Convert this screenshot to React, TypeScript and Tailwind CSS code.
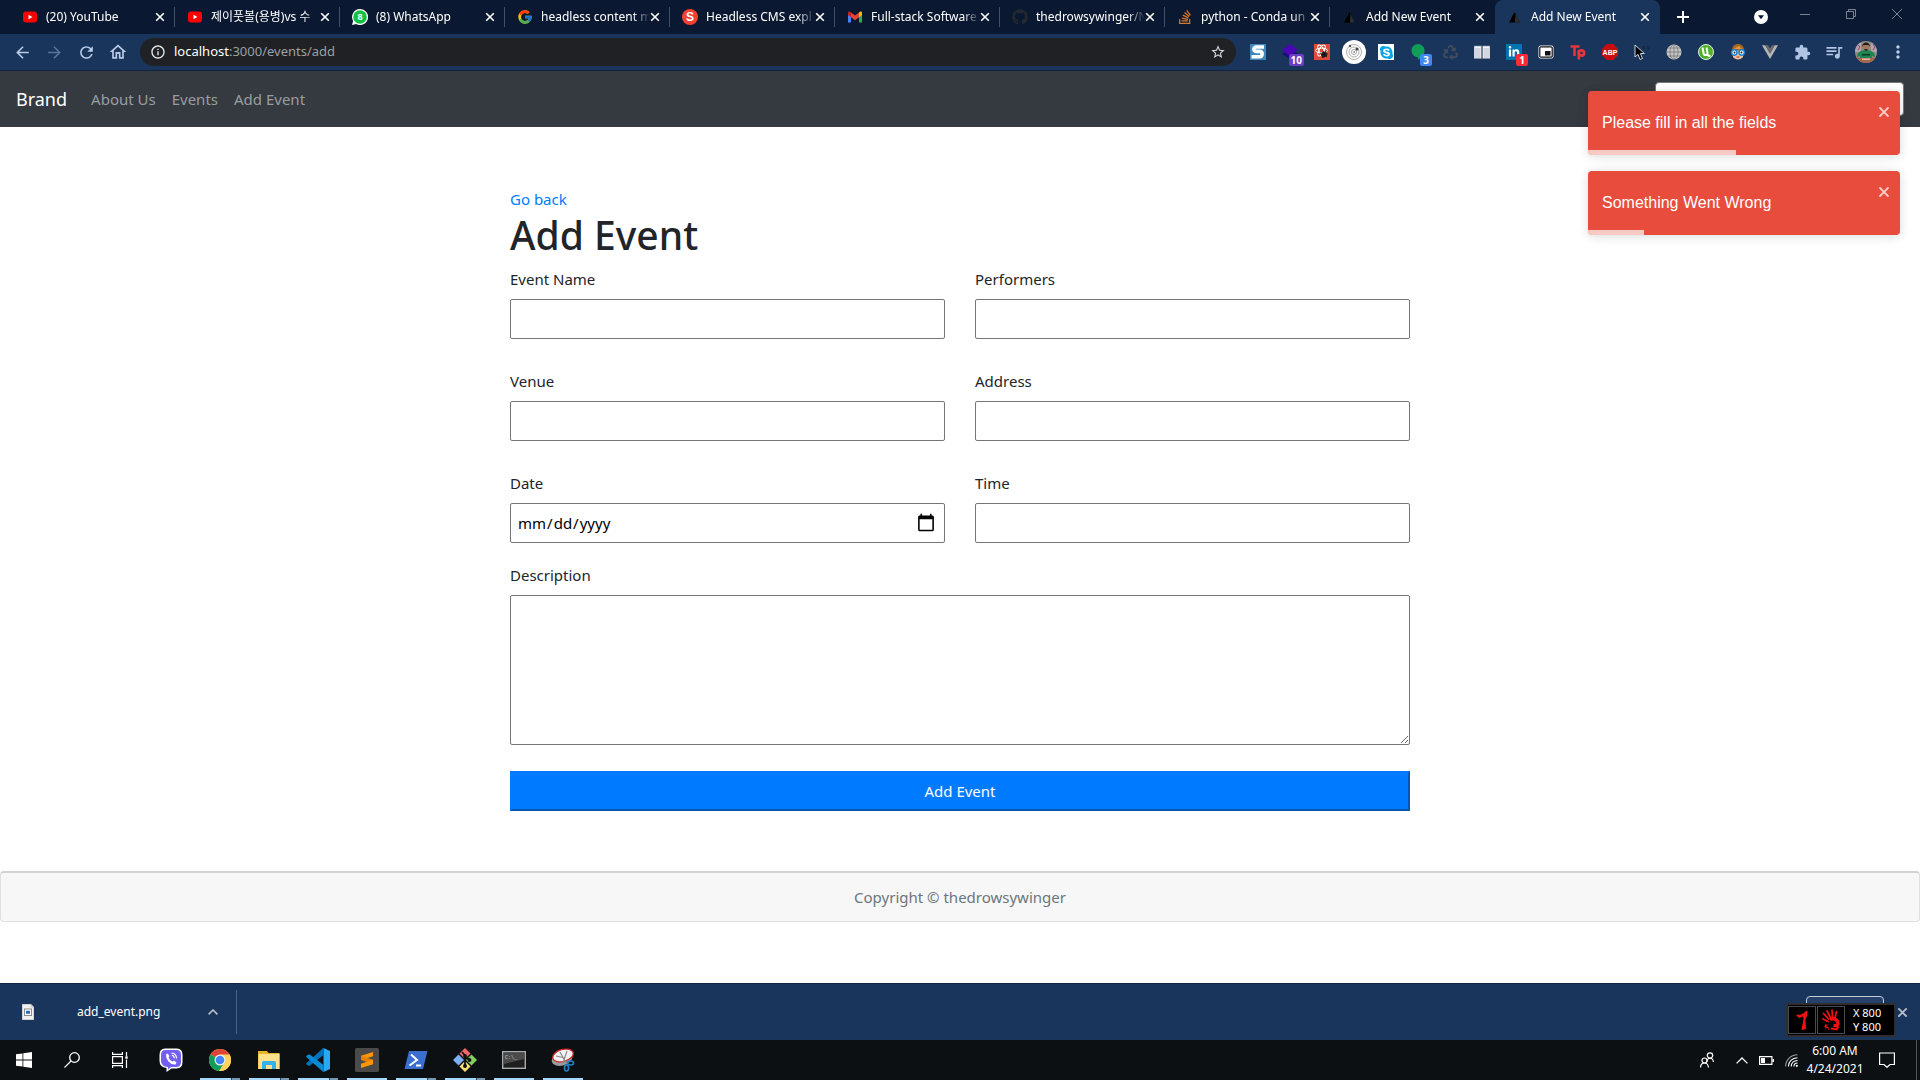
import React from "react";
import type { ReactNode } from "react";
import {
  FaGithub,
  FaLinkedinIn,
  FaRecycle,
  FaSkype,
  FaStackOverflow,
} from "react-icons/fa";
import { FcGoogle } from "react-icons/fc";
import {
  MdArrowBack,
  MdArrowForward,
  MdExtension,
  MdInfoOutline,
  MdMoreVert,
  MdOutlineHome,
  MdQueueMusic,
  MdRefresh,
  MdStarBorder,
} from "react-icons/md";

/* ---------- Favicons ---------- */

function YouTubeIcon() {
  return (
    <svg viewBox="0 0 16 16" className="size-4" aria-hidden="true">
      <rect x="1" y="2.5" width="14" height="11" rx="3" fill="#f00" />
      <path d="M6.5 5.7v4.6L10.4 8z" fill="#fff" />
    </svg>
  );
}

function WhatsAppIcon() {
  return (
    <svg viewBox="0 0 16 16" className="size-4" aria-hidden="true">
      <path d="M8 0a8 8 0 1 1-3.8 15L0 16l1.1-4A8 8 0 0 1 8 0z" fill="#fff" />
      <circle cx="8" cy="8" r="6.8" fill="#12c143" />
      <text x="8" y="11.4" textAnchor="middle" fontSize="9" fontWeight="700" fontFamily="Liberation Sans, sans-serif" fill="#fff">
        8
      </text>
    </svg>
  );
}

function SIcon() {
  return (
    <svg viewBox="0 0 16 16" className="size-4" aria-hidden="true">
      <circle cx="8" cy="8" r="8" fill="#f43f33" />
      <text x="8" y="12.400" textAnchor="middle" fontSize="12" fontWeight="700" fontFamily="Liberation Sans, sans-serif" fill="#fff">
        S
      </text>
    </svg>
  );
}

function GmailIcon() {
  return (
    <svg viewBox="0 0 16 16" className="size-4" aria-hidden="true">
      <path d="M1 4.5v9h3v-6.500z" fill="#4285f4" />
      <path d="M15 4.500v9h-3V7z" fill="#34a853" />
      <path d="M4 3.500v4.800L1 6V4c0-1.600 1.700-2 3-.5z" fill="#c5221f" />
      <path d="M12 3.500v4.800L15 6V4c0-1.600-1.700-2-3-.5z" fill="#fbbc04" />
      <path d="M4 3.500l4 3 4-3v4.800l-4 3-4-3z" fill="#ea4335" />
    </svg>
  );
}

function TriangleIcon() {
  return (
    <svg viewBox="0 0 16 16" className="size-4" aria-hidden="true">
      <path d="M7.500 3l5.500 10.500H2z" fill="#000" />
      <path d="M8.500 5l4.500 8.500H8z" fill="#2c2f33" />
    </svg>
  );
}

/* ---------- Browser tab strip ---------- */

type Tab = { title: string; icon: ReactNode; active?: boolean };

const tabs: Tab[] = [
  { title: "(20) YouTube", icon: <YouTubeIcon /> },
  { title: "제이풋볼(용병)vs 수", icon: <YouTubeIcon /> },
  { title: "(8) WhatsApp", icon: <WhatsAppIcon /> },
  { title: "headless content m", icon: <FcGoogle className="size-4" /> },
  { title: "Headless CMS expl", icon: <SIcon /> },
  { title: "Full-stack Software", icon: <GmailIcon /> },
  { title: "thedrowsywinger/N", icon: <FaGithub className="size-4 text-[#24292f]" /> },
  { title: "python - Conda un", icon: <FaStackOverflow className="size-4 text-[#d9782d]" /> },
  { title: "Add New Event", icon: <TriangleIcon /> },
  { title: "Add New Event", icon: <TriangleIcon />, active: true },
];

function CloseGlyph({ className }: { className: string }) {
  return (
    <svg viewBox="0 0 10 10" className={className} fill="none" stroke="currentColor" strokeWidth="1.6" aria-hidden="true">
      <path d="M1.200 1.200l7.600 7.600M8.800 1.200L1.200 8.800" />
    </svg>
  );
}

function BrowserTab({ tab, divider }: { tab: Tab; divider: boolean }) {
  return (
    <div
      className={
        tab.active
          ? "flex h-full w-[165px] items-center rounded-t-lg bg-[#1a355c] pr-[10px] pl-3"
          : "flex h-full w-[165px] items-center pl-3"
      }
    >
      <span className="w-4 shrink-0">{tab.icon}</span>
      <span className="ml-2 min-w-0 flex-1 whitespace-nowrap text-white [mask-image:linear-gradient(to_right,black_84%,transparent)]">
        {tab.title}
      </span>
      <button type="button" aria-label={"Close " + tab.title} className="flex h-4 w-[10px] shrink-0 items-center justify-center text-white">
        <CloseGlyph className="size-[10px]" />
      </button>
      {!tab.active && <span className={divider ? "ml-[9px] h-5 w-px bg-[#414f66]" : "ml-[9px] h-5 w-px"} />}
    </div>
  );
}

function TabStrip() {
  return (
    <div className="flex h-[34px] items-stretch bg-[#0a1931] pl-[10px] text-xs">
      {tabs.map((tab, i) => (
        <BrowserTab key={i} tab={tab} divider={i < 8} />
      ))}
      <button type="button" aria-label="New tab" className="ml-[11px] flex w-6 items-center justify-center text-white">
        <svg viewBox="0 0 12 12" className="size-3" stroke="currentColor" strokeWidth="2" aria-hidden="true">
          <path d="M6 0v12M0 6h12" />
        </svg>
      </button>
      <div className="ml-auto flex items-stretch text-[#7c8492]">
        <button type="button" aria-label="Search tabs" className="mr-[14px] flex items-center">
          <svg viewBox="0 0 14 14" className="size-[14px]" aria-hidden="true">
            <circle cx="7" cy="7" r="7" fill="#fff" />
            <path d="M4 5.200h6L7 9.200z" fill="#0a1931" />
          </svg>
        </button>
        <button type="button" aria-label="Minimize" className="flex h-7 w-[46px] items-center justify-center">
          <svg viewBox="0 0 10 10" className="size-[10px]" stroke="currentColor" aria-hidden="true">
            <path d="M0 5.500h10" />
          </svg>
        </button>
        <button type="button" aria-label="Restore" className="flex h-7 w-[46px] items-center justify-center">
          <svg viewBox="0 0 10 10" className="size-[10px]" fill="none" stroke="currentColor" aria-hidden="true">
            <path d="M.5 2.500h7v7h-7zM2.500 2.500v-2h7v7h-2" />
          </svg>
        </button>
        <button type="button" aria-label="Close window" className="flex h-7 w-[46px] items-center justify-center">
          <svg viewBox="0 0 10 10" className="size-[10px]" stroke="currentColor" aria-hidden="true">
            <path d="M0 0l10 10M10 0L0 10" />
          </svg>
        </button>
      </div>
    </div>
  );
}

/* ---------- Browser toolbar ---------- */

function StylishIcon() {
  return (
    <svg viewBox="0 0 16 16" className="size-4" aria-hidden="true">
      <rect width="16" height="16" fill="#3f87b8" />
      <path d="M14 3H6.500C3 3 3 7.400 6.500 7.400h3c3.500 0 3.500 5.400 0 5.400H1.500" fill="none" stroke="#fff" strokeWidth="3.600" />
    </svg>
  );
}

function DiamondIcon() {
  return (
    <svg viewBox="0 0 16 16" className="size-4" aria-hidden="true">
      <path d="M8 4.500L16 10l-8 5-8-5z" fill="#1d0c78" />
      <path d="M8 0l8 6-8 6-8-6z" fill="#4a05b5" />
    </svg>
  );
}

function ReactHexIcon() {
  return (
    <svg viewBox="0 0 16 16" className="size-4" aria-hidden="true">
      <rect width="16" height="16" fill="#dd4b39" />
      <g fill="none" stroke="#fff" strokeWidth="1">
        <ellipse cx="7.500" cy="6.500" rx="6" ry="2.400" />
        <ellipse cx="7.500" cy="6.500" rx="6" ry="2.400" transform="rotate(60 7.500 6.500)" />
        <ellipse cx="7.500" cy="6.500" rx="6" ry="2.400" transform="rotate(120 7.500 6.500)" />
      </g>
      <path d="M9 7l3.500 1.500L13 12l-4 2-2-3z" fill="#1a1a1a" />
      <path d="M6 9l7 4M12 7l-4 7M14 10l-7 1" stroke="#1a1a1a" strokeWidth=".9" />
    </svg>
  );
}

function OrbitIcon() {
  return (
    <svg viewBox="0 0 24 24" className="size-6" aria-hidden="true">
      <circle cx="12" cy="12" r="12" fill="#fff" />
      <g fill="none" stroke="#9a9a9a" strokeWidth=".8">
        <circle cx="12" cy="12" r="7.500" />
        <circle cx="12" cy="12" r="5" />
        <circle cx="12" cy="12" r="2.600" />
      </g>
      <circle cx="8" cy="6" r="1.200" fill="#555" />
      <circle cx="15" cy="9" r="1.500" fill="#444" />
      <circle cx="12" cy="12" r="1.100" fill="#999" />
    </svg>
  );
}

function SkypeIcon() {
  return (
    <span className="flex size-4 items-center justify-center bg-white">
      <FaSkype className="size-[15px] text-[#0aa5e8]" />
    </span>
  );
}

function HangoutsIcon() {
  return (
    <svg viewBox="0 0 16 16" className="size-4" aria-hidden="true">
      <path d="M8 0a6.600 6.600 0 0 1 6.600 6.600c0 4-3 7.400-6.600 9.200v-2.600A6.600 6.600 0 1 1 8 0z" fill="#0f9d58" />
    </svg>
  );
}

function ColumnsIcon() {
  return (
    <svg viewBox="0 0 16 16" className="size-4" aria-hidden="true">
      <rect x="0" y="2" width="7.300" height="12.500" fill="#f2f4f7" stroke="#8792a6" strokeWidth=".6" />
      <rect x="8.700" y="2" width="7.300" height="12.500" fill="#f2f4f7" stroke="#8792a6" strokeWidth=".6" />
      <path d="M1 4h5.500v10H1zM9.500 4H15v10H9.500z" fill="#d3d6dd" />
    </svg>
  );
}

function LinkedInIcon() {
  return (
    <span className="flex size-4 items-center justify-center bg-[#0073b1]">
      <FaLinkedinIn className="size-3 text-white" />
    </span>
  );
}

function PipIcon() {
  return (
    <svg viewBox="0 0 16 16" className="size-4" aria-hidden="true">
      <rect x=".5" y="1.500" width="15" height="13" rx="2" fill="#fff" />
      <rect x="1.800" y="2.800" width="12.400" height="10.400" rx="1" fill="#fff" stroke="#111" strokeWidth="1.200" />
      <rect x="7" y="7" width="5.500" height="4.500" fill="#111" />
    </svg>
  );
}

function TpIcon() {
  return (
    <svg viewBox="0 0 16 16" className="size-4" fill="none" stroke="#e8343b" strokeWidth="2.600" aria-hidden="true">
      <path d="M.5 2.500h9M4.500 2v10" />
      <path d="M8.800 6v9.500" />
      <circle cx="11.500" cy="9" r="2.600" />
    </svg>
  );
}

function AbpIcon() {
  return (
    <svg viewBox="0 0 16 16" className="size-4" aria-hidden="true">
      <path d="M4.700 0h6.600L16 4.700v6.600L11.300 16H4.700L0 11.300V4.700z" fill="#c70d12" />
      <text x="8" y="10.600" textAnchor="middle" fontSize="7" fontWeight="700" fontFamily="Liberation Sans, sans-serif" fill="#fff">
        ABP
      </text>
    </svg>
  );
}

function CursorIcon() {
  return (
    <svg viewBox="0 0 16 16" className="size-4" aria-hidden="true">
      <path d="M1 1v12l3-2.600L6 15.500l2.500-1L6.400 9.500h4z" fill="#000" stroke="#dfe5ee" strokeWidth=".9" />
      <text x="8" y="5" fontSize="6" fontFamily="Liberation Sans, sans-serif" fill="#0c1526">
        x,y
      </text>
    </svg>
  );
}

function GlobeIcon() {
  return (
    <svg viewBox="0 0 16 16" className="size-4" aria-hidden="true">
      <circle cx="8" cy="8" r="7.500" fill="#c5c5c5" />
      <g fill="none" stroke="#777" strokeWidth=".8">
        <path d="M8 .5v15M.5 8h15M1.800 4h12.400M1.800 12h12.400" />
        <ellipse cx="8" cy="8" rx="4" ry="7.500" />
      </g>
    </svg>
  );
}

function UtorrentIcon() {
  return (
    <svg viewBox="0 0 16 16" className="size-4" aria-hidden="true">
      <circle cx="8" cy="8" r="7.500" fill="#4fb02a" stroke="#e8f5e2" />
      <path d="M4.500 3.500l1 5.500c.5 3 4.300 2.500 4 0l-1-5.500M9.700 10.500c.3 1.500 1.300 1.700 2.800 1" fill="none" stroke="#fff" strokeWidth="2" />
    </svg>
  );
}

function FaceIcon() {
  return (
    <svg viewBox="0 0 16 16" className="size-4" aria-hidden="true">
      <path d="M2 12V6c0-8 12-8 12 0v6z" fill="#a8661d" />
      <path d="M3 6.500h10V13c-2.500 3.300-7.500 3.300-10 0z" fill="#f3c398" />
      <path d="M5 4l4-2 3 3H4z" fill="#d99845" />
      <g fill="#fff" stroke="#1681d9" strokeWidth="1.500">
        <circle cx="4.300" cy="8.500" r="2.700" />
        <circle cx="11.700" cy="8.500" r="2.700" />
      </g>
      <circle cx="4.500" cy="8.500" r="1" fill="#222" />
      <circle cx="11.500" cy="8.500" r="1" fill="#222" />
      <path d="M6.500 13h3" stroke="#a33" />
    </svg>
  );
}

function VueIcon() {
  return (
    <svg viewBox="0 0 16 16" className="size-4" aria-hidden="true">
      <path d="M0 1.200h3.200L8 9.500l4.800-8.300H16L8 15z" fill="#b5b5b5" />
      <path d="M3.200 1.200H6L8 4.600l2-3.400h2.800L8 9.500z" fill="#6b6b6b" />
    </svg>
  );
}

function AvatarIcon() {
  return (
    <svg viewBox="0 0 22 22" className="size-[22px] rounded-full" aria-hidden="true">
      <rect width="22" height="22" fill="#8f8f80" />
      <path d="M0 2h6v9H0zM16 2h6v9h-6z" fill="#b2a1b0" />
      <path d="M3 4l2 2-2 3M18 3l2 3-2 3" stroke="#a23c4c" fill="none" />
      <path d="M2 16c0-5 4-7 9-7s9 2 9 7l-3-1v4H5v-4z" fill="#1c8553" />
      <circle cx="11" cy="6" r="3.400" fill="#a8765a" />
      <path d="M7 6c0-6 8-6 8 0l-1.500-2h-5z" fill="#1d1b1c" />
      <path d="M9 8h4l-2 2.200z" fill="#2f211f" />
      <path d="M7 13h8v1.500H7z" fill="#14342a" />
      <path d="M1 16l5 1h10l5-1v6H1z" fill="#a8664e" />
      <path d="M7 17.500h8V19H7z" fill="#e2b9a0" />
    </svg>
  );
}

type Extension = { name: string; icon: ReactNode; badge?: string; badgeClass?: string };

const extensions: Extension[] = [
  { name: "Stylish", icon: <StylishIcon /> },
  { name: "Layers", icon: <DiamondIcon />, badge: "10", badgeClass: "bg-[#6b3cc4]" },
  { name: "React tools", icon: <ReactHexIcon /> },
  { name: "Orbit", icon: <OrbitIcon /> },
  { name: "Skype", icon: <SkypeIcon /> },
  { name: "Hangouts", icon: <HangoutsIcon />, badge: "3", badgeClass: "bg-[#4285f4]" },
  { name: "Recycle", icon: <FaRecycle className="size-[15px] text-[#434c5b]" /> },
  { name: "Columns", icon: <ColumnsIcon /> },
  { name: "LinkedIn", icon: <LinkedInIcon />, badge: "1", badgeClass: "bg-[#fa2b35]" },
  { name: "Picture in picture", icon: <PipIcon /> },
  { name: "Toptal", icon: <TpIcon /> },
  { name: "Adblock Plus", icon: <AbpIcon /> },
  { name: "Coordinates", icon: <CursorIcon /> },
  { name: "Globe", icon: <GlobeIcon /> },
  { name: "uTorrent", icon: <UtorrentIcon /> },
  { name: "Spy", icon: <FaceIcon /> },
  { name: "Vue devtools", icon: <VueIcon /> },
  { name: "Extensions", icon: <MdExtension className="size-[17px] text-[#b0c4e4]" /> },
  { name: "Media", icon: <MdQueueMusic className="size-5 text-[#b0c4e4]" /> },
  { name: "Profile", icon: <AvatarIcon /> },
  { name: "Menu", icon: <MdMoreVert className="size-5 text-[#c0cfe8]" /> },
];

function Toolbar() {
  return (
    <div className="flex h-[37px] items-center border-b border-[#13233d] bg-[#1a355c] pr-[6px] pl-[6px] text-[#b9cbe8]">
      <button type="button" aria-label="Back" className="flex w-8 justify-center">
        <MdArrowBack className="size-[19px]" />
      </button>
      <button type="button" aria-label="Forward" className="flex w-8 justify-center text-[#5a7398]">
        <MdArrowForward className="size-[19px]" />
      </button>
      <button type="button" aria-label="Reload" className="flex w-8 justify-center">
        <MdRefresh className="size-[19px]" />
      </button>
      <button type="button" aria-label="Home" className="flex w-8 justify-center">
        <MdOutlineHome className="size-5" />
      </button>
      <div className="ml-[6px] flex h-7 min-w-0 flex-1 items-center rounded-full bg-[#202124] px-[10px]">
        <MdInfoOutline className="size-4 text-[#e8eaed]" />
        <span className="ml-2 flex-1 text-[13px] text-[#9aa0a6]">
          <span className="text-white">localhost</span>:3000/events/add
        </span>
        <MdStarBorder className="size-4 text-[#dadce0]" />
      </div>
      <div className="ml-[6px] flex items-center">
        {extensions.map((ext) => (
          <button key={ext.name} type="button" aria-label={ext.name} className="relative flex h-7 w-8 items-center justify-center">
            {ext.icon}
            {ext.badge && (
              <span
                className={
                  "absolute right-[2px] bottom-0 flex h-3 min-w-3 items-center justify-center rounded-[2px] px-[2px] text-[10px] leading-3 font-bold text-white " +
                  ext.badgeClass
                }
              >
                {ext.badge}
              </span>
            )}
          </button>
        ))}
      </div>
    </div>
  );
}

/* ---------- Page ---------- */

function NavBar() {
  return (
    <nav className="flex h-14 items-center bg-[#343a40] px-4 text-[#9a9da0]">
      <a href="#brand" className="mr-4 text-lg text-white">
        Brand
      </a>
      <a href="#about" className="px-2 text-[15px]">
        About Us
      </a>
      <a href="#events" className="px-2 text-[15px]">
        Events
      </a>
      <a href="#add" className="px-2 text-[15px]">
        Add Event
      </a>
      <input type="text" aria-label="Search events" className="ml-auto h-[34px] w-[249px] rounded border border-[#767676] bg-white px-3" />
    </nav>
  );
}

function Field({ id, label, type }: { id: string; label: string; type: string }) {
  return (
    <div>
      <label htmlFor={id} className="mb-2 block">
        {label}
      </label>
      <input
        id={id}
        type={type}
        className="block h-10 w-full rounded-[2px] border border-[#767676] bg-white px-[6px] text-[15px] text-black [&::-webkit-calendar-picker-indicator]:size-5"
      />
    </div>
  );
}

function EventForm() {
  return (
    <main className="mx-auto mt-[60px] w-full max-w-[900px] text-[15px] leading-6 text-[#212529]">
      <a href="#events" className="block text-[#007bff]">
        Go back
      </a>
      <h1 className="mb-2 text-[39px] leading-[48px] font-medium">Add Event</h1>
      <form>
        <div className="grid grid-cols-2 gap-x-[30px] gap-y-[30px]">
          <Field id="name" label="Event Name" type="text" />
          <Field id="performers" label="Performers" type="text" />
          <Field id="venue" label="Venue" type="text" />
          <Field id="address" label="Address" type="text" />
          <Field id="date" label="Date" type="date" />
          <Field id="time" label="Time" type="text" />
        </div>
        <label htmlFor="description" className="mt-5 mb-2 block">
          Description
        </label>
        <textarea id="description" className="block h-[150px] w-full rounded-[2px] border border-[#767676] bg-white p-2 text-black" />
        <button
          type="button"
          className="mt-[26px] block h-10 w-full border-2 border-[#007bff] border-r-[#0a56ad] border-b-[#0a56ad] bg-[#007bff] text-white"
        >
          Add Event
        </button>
      </form>
    </main>
  );
}

function Toast({ message, progress }: { message: string; progress: number }) {
  return (
    <div role="alert" className="relative flex h-16 w-[312px] items-center overflow-hidden rounded bg-[#e74c3c] px-[14px] text-white shadow-[0_1px_10px_0_rgba(0,0,0,0.1),0_2px_15px_0_rgba(0,0,0,0.05)]">
      <span className="text-base">{message}</span>
      <button type="button" aria-label="Dismiss" className="absolute top-[15px] right-[10px] text-[#f8cfca]">
        <CloseGlyph className="size-3" />
      </button>
      <div className="absolute bottom-0 left-0 h-[5px] bg-white/70" style={{ width: progress + "%" }} />
    </div>
  );
}

function Toasts() {
  return (
    <div className="absolute top-5 right-5 flex flex-col gap-4 font-['Liberation_Sans',sans-serif]">
      <Toast message="Please fill in all the fields" progress={47.500} />
      <Toast message="Something Went Wrong" progress={18} />
    </div>
  );
}

/* ---------- Download shelf ---------- */

function RedOneIcon() {
  return (
    <svg viewBox="0 0 26 26" className="size-[26px]" fill="#f50f0f" aria-hidden="true">
      <path d="M7 8.500l2-1 2 .5 4-2 2-2h1.500l-.5 5-1.500 3.500.5 9-1.500 1-3 .5.500-3.500 1-4 .5-4.500-1-1.500-3 1.500z" />
    </svg>
  );
}

function RedHandIcon() {
  return (
    <svg viewBox="0 0 26 26" className="size-[26px]" fill="none" stroke="#f50f0f" aria-hidden="true">
      <path d="M10.500 12L5.500 6.500M12.500 10.500L9 4M14.500 10.500L14 3M17 11l1.500-6.500M10 14.500L5 12" strokeWidth="1.700" strokeLinecap="round" />
      <path d="M12 12.500c4-2 7.500 0 8 3.500.3 2-1 3-4.500 2.500" strokeWidth="3.400" />
      <path d="M8.500 17.500L7 20M13 21.500l5.500 1 2-3" strokeWidth="2" />
      <path d="M7 21l2.500-1 1.500 2.500" strokeWidth="1.300" />
    </svg>
  );
}

function MouseOverlay() {
  return (
    <div className="absolute top-[19px] right-6 flex h-[34px] w-[110px] items-center rounded-[3px] border-2 border-[#2e2e2e] bg-black text-[11px] leading-[14px] text-white">
      <span className="flex size-[28px] items-center justify-center border border-[#4a4a4a]">
        <RedOneIcon />
      </span>
      <span className="ml-px flex size-[28px] items-center justify-center border border-[#4a4a4a]">
        <RedHandIcon />
      </span>
      <span className="ml-2 whitespace-nowrap">
        X 800
        <br />Y 800
      </span>
    </div>
  );
}

function DownloadShelf() {
  return (
    <div className="relative flex h-[57px] items-center border-t border-[#13233d] bg-[#1a355c] text-xs text-white">
      <svg viewBox="0 0 12 16" className="ml-[22px] h-4 w-3" aria-hidden="true">
        <path d="M0 0h8.500L12 3.500V16H0z" fill="#f1f1f1" stroke="#b5b5b5" />
        <path d="M8.500 0v3.500H12" fill="#cfcfcf" />
        <rect x="2.500" y="5" width="7" height="6.500" fill="#fff" stroke="#8b8b8b" />
        <rect x="4" y="6.800" width="4" height="3" fill="#2d6cb5" />
      </svg>
      <span className="ml-[43px] w-[126px]">add_event.png</span>
      <button type="button" aria-label="Download options" className="flex w-5 justify-center text-[#b8bfca]">
        <svg viewBox="0 0 10 6" className="h-[6px] w-[10px]" fill="none" stroke="currentColor" strokeWidth="1.600" aria-hidden="true">
          <path d="M.6 5.400L5 1l4.400 4.400" />
        </svg>
      </button>
      <span className="ml-[13px] h-11 w-px bg-[#4a6080]" />
      <button type="button" aria-label="Show all downloads" className="mr-[13px] ml-auto h-8 w-[78px] rounded border border-[#c3ccd9] bg-[#254169]" />
      <button type="button" aria-label="Close downloads" className="mr-3 text-[#b8bfca]">
        <CloseGlyph className="size-[11px]" />
      </button>
      <MouseOverlay />
    </div>
  );
}

/* ---------- Taskbar ---------- */

function WindowsIcon() {
  return (
    <svg viewBox="0 0 16 16" className="size-4" fill="#fff" aria-hidden="true">
      <path d="M0 2.300L6.500 1.400v6.200H0zM7.300 1.300L16 0v7.600H7.300zM0 8.400h6.500v6.200L0 13.700zM7.300 8.400H16V16l-8.700-1.300z" />
    </svg>
  );
}

function SearchIcon() {
  return (
    <svg viewBox="0 0 16 16" className="size-4" fill="none" stroke="#fff" strokeWidth="1.300" aria-hidden="true">
      <circle cx="10.500" cy="5.500" r="4.800" />
      <path d="M7 9L.5 15.500" />
    </svg>
  );
}

function TaskViewIcon() {
  return (
    <svg viewBox="0 0 16 16" className="size-4" fill="none" stroke="#fff" strokeWidth="1.200" aria-hidden="true">
      <path d="M.6 4.600h9.800v6.800H.6zM.6 0v2.400h9.800V0M.6 16v-2.400h9.800V16M14.500 0v4M14.500 7.500V16" />
      <rect x="13.300" y="4.300" width="2.400" height="2.400" fill="#fff" stroke="none" />
    </svg>
  );
}

function ViberIcon() {
  return (
    <svg viewBox="0 0 24 24" className="size-6" aria-hidden="true">
      <path d="M6 .5h12Q23.500.5 23.500 7v7q0 6.500-6 6.500h-5L7.500 24v-4Q.5 19 .5 13V7Q.5.500 6 .5z" fill="#fff" />
      <path d="M6.500 2h11Q22 2 22 7v7q0 5-5 5h-5l-3 2.500V19Q2 18.500 2 13V7q0-5 4.500-5z" fill="#7360f2" />
      <path d="M7 6.500l1.500-1 2 2.500-1 1.500q1 3 4 4l1.500-1 2.500 2-1 2q-4 .5-7-3T7 6.500z" fill="#fff" />
      <path d="M12.500 5q5 .5 5 5.500M12.800 7.300q2.500.3 2.500 2.900" fill="none" stroke="#fff" strokeWidth="1.100" />
    </svg>
  );
}

function ChromeIcon() {
  return (
    <svg viewBox="0 0 24 24" className="size-[22px]" aria-hidden="true">
      <circle cx="12" cy="12" r="12" fill="#fdd35b" />
      <path d="M12 12L1.600 6A12 12 0 0 1 22.400 6z" fill="#db4437" />
      <path d="M1.600 6A12 12 0 0 0 11 24l6-9-5-3z" fill="#0f9d58" />
      <path d="M12 6h10.400A12 12 0 0 1 11 24l6-9z" fill="#fdd35b" />
      <circle cx="12" cy="12" r="6" fill="#f1f1f1" />
      <circle cx="12" cy="12" r="4.700" fill="#4285f4" />
    </svg>
  );
}

function ExplorerIcon() {
  return (
    <svg viewBox="0 0 22 20" className="h-5 w-[22px]" aria-hidden="true">
      <path d="M0 1h9l1.500 2H21.500v16H0z" fill="#e9b42c" />
      <path d="M.5 4H21.500v15H.5z" fill="#ffe08c" />
      <path d="M4 19v-6.500q0-1.500 1.500-1.500h11q1.500 0 1.500 1.500V19h-4v-4H8v4z" fill="#35b1e8" />
    </svg>
  );
}

function VsCodeIcon() {
  return (
    <svg viewBox="0 0 24 24" className="size-6" aria-hidden="true">
      <path d="M17.500 0L24 3v18l-6.500 3z" fill="#29a9f1" />
      <path d="M17.500 0v7L3.500 18 1 17 0 15.500 17 .2z" fill="#0072bc" />
      <path d="M17.500 24v-7L3.500 6.200 1 7.200 0 8.700 17 23.800z" fill="#0a8ad6" />
    </svg>
  );
}

function SublimeIcon() {
  return (
    <svg viewBox="0 0 24 24" className="size-6" aria-hidden="true">
      <rect width="24" height="24" rx="1.500" fill="#4a4a4a" />
      <path d="M18 4v4.300L6 12V7.700z" fill="#ff9800" />
      <path d="M6 7.700V12l12 4v-4.300z" fill="#e58100" />
      <path d="M18 11.800v4.400L6 20v-4.300z" fill="#ff9800" />
    </svg>
  );
}

function PowerShellIcon() {
  return (
    <svg viewBox="0 0 24 20" className="h-5 w-6" aria-hidden="true">
      <path d="M5 1h18.500L19 19H.5z" fill="#3a6fd0" />
      <path d="M7 4.500l6 5.500-7.500 5.500" fill="none" stroke="#fff" strokeWidth="2" />
      <path d="M12 15.500h5" stroke="#fff" strokeWidth="2" />
    </svg>
  );
}

function GitIcon() {
  return (
    <svg viewBox="0 0 24 24" className="size-6" aria-hidden="true">
      <path d="M12 0l5.500 5.500L12 11 6.500 5.500z" fill="#f0686a" />
      <path d="M5.500 6.500L11 12l-5.500 5.500L0 12z" fill="#7bb0f5" />
      <path d="M18.500 6.500L24 12l-5.500 5.500L13 12z" fill="#82cf5a" />
      <path d="M12 13l5.500 5.500L12 24l-5.500-5.500z" fill="#fbe171" />
      <path d="M9 4l3 3.500V18M12 8.500l4.500 3.500" fill="none" stroke="#111" strokeWidth="1.800" />
      <g fill="#111">
        <circle cx="12" cy="8" r="1.900" />
        <circle cx="12" cy="18" r="2" />
        <circle cx="16.500" cy="12" r="1.900" />
      </g>
    </svg>
  );
}

function ConsoleIcon() {
  return (
    <svg viewBox="0 0 24 18" className="h-[18px] w-6" aria-hidden="true">
      <rect x=".7" y=".7" width="22.600" height="16.600" fill="#1f1f1f" stroke="#a9adad" strokeWidth="1.400" />
      <path d="M2 2h20v6L2 13z" fill="#4b4b4b" />
      <text x="3" y="8" fontSize="5" fontFamily="Liberation Mono, monospace" fill="#ccc">
        C:\_
      </text>
    </svg>
  );
}

function SnippingIcon() {
  return (
    <svg viewBox="0 0 24 24" className="size-6" aria-hidden="true">
      <ellipse cx="11" cy="11" rx="10.500" ry="6.500" transform="rotate(-16 11 11)" fill="#9b9b9b" />
      <ellipse cx="12" cy="7.500" rx="10.500" ry="6" transform="rotate(-16 12 7.500)" fill="#f4f4f4" stroke="#d82727" strokeWidth="1.300" />
      <path d="M9 4l6 11M16 3l-4 12M5 8l9 2" stroke="#8b8b8b" strokeWidth="1.200" />
      <g fill="none" stroke="#1d85c9" strokeWidth="1.600">
        <ellipse cx="19.500" cy="15" rx="3" ry="2" />
        <ellipse cx="15.500" cy="20" rx="2" ry="3" />
      </g>
    </svg>
  );
}

type App = { name: string; icon: ReactNode; running: "none" | "one" | "many" };

const apps: App[] = [
  { name: "Viber", icon: <ViberIcon />, running: "none" },
  { name: "Chrome", icon: <ChromeIcon />, running: "many" },
  { name: "File Explorer", icon: <ExplorerIcon />, running: "many" },
  { name: "Visual Studio Code", icon: <VsCodeIcon />, running: "many" },
  { name: "Sublime Text", icon: <SublimeIcon />, running: "one" },
  { name: "PowerShell", icon: <PowerShellIcon />, running: "many" },
  { name: "Git Bash", icon: <GitIcon />, running: "many" },
  { name: "Command Prompt", icon: <ConsoleIcon />, running: "one" },
  { name: "Snipping Tool", icon: <SnippingIcon />, running: "one" },
];

function Taskbar() {
  return (
    <div className="flex h-10 items-stretch bg-[#0c1013] text-[12px] text-white">
      <button type="button" aria-label="Start" className="flex w-12 items-center justify-center">
        <WindowsIcon />
      </button>
      <button type="button" aria-label="Search" className="flex w-12 items-center justify-center">
        <SearchIcon />
      </button>
      <button type="button" aria-label="Task view" className="flex w-12 items-center justify-center">
        <TaskViewIcon />
      </button>
      <div className="ml-[2px] flex">
        {apps.map((app) => (
          <button key={app.name} type="button" aria-label={app.name} className="relative flex w-[49px] items-center justify-center">
            {app.icon}
            {app.running !== "none" && (
              <span className="absolute right-[4px] bottom-0 left-[5px] flex h-[2px] bg-[#a6d8fb]">
                {app.running === "many" && <span className="ml-auto w-[9px] border-l border-[#33414c] bg-[#7699b3]" />}
              </span>
            )}
          </button>
        ))}
      </div>
      <div className="ml-auto flex items-center">
        <svg viewBox="0 0 14 16" className="mr-[22px] h-4 w-[14px]" fill="none" stroke="#fff" strokeWidth="1.200" aria-hidden="true">
          <circle cx="10" cy="3.500" r="2.700" />
          <path d="M7 10c0-5 6-5 6.400 0" />
          <circle cx="4.500" cy="8.500" r="2.500" />
          <path d="M.6 15.500c0-6 7.800-6 7.800 0" />
        </svg>
        <svg viewBox="0 0 12 7" className="mr-[11px] h-[7px] w-3" fill="none" stroke="#fff" strokeWidth="1.300" aria-hidden="true">
          <path d="M.6 6.400L6 1l5.400 5.400" />
        </svg>
        <svg viewBox="0 0 15 9" className="mr-[11px] h-[9px] w-[15px]" aria-hidden="true">
          <path d="M.6.600h12.300v7.800H.6z" fill="none" stroke="#fff" strokeWidth="1.200" />
          <path d="M2 2h4v5H2zM13.500 3H15v3h-1.500z" fill="#fff" />
        </svg>
        <svg viewBox="0 0 13 13" className="mr-[11px] size-[13px]" fill="none" stroke="#fff" strokeWidth="1.100" aria-hidden="true">
          <path d="M.6 12.500C.6 6 5.500 1 12.500.8" stroke="#999" />
          <path d="M3.400 12.500c0-4.800 3.600-8.600 9.100-8.700M6.200 12.500c0-3.400 2.600-5.900 6.300-6M8.900 12.500c0-2 1.500-3.400 3.600-3.500" />
          <circle cx="11.800" cy="11.800" r="1.100" fill="#fff" stroke="none" />
        </svg>
        <div className="w-[52px] text-center leading-[18px] whitespace-nowrap">
          <div>6:00 AM</div>
          <div className="flex justify-center">4/24/2021</div>
        </div>
        <svg viewBox="0 0 16 16" className="mr-[21px] ml-[18px] size-4" fill="none" stroke="#fff" strokeWidth="1.200" aria-hidden="true">
          <path d="M.6 1h14.800v11.500H11L8 15.300l-3-2.800H.6z" />
        </svg>
        <span className="mr-[3px] h-10 w-px bg-[#55585b]" />
      </div>
    </div>
  );
}

export default function App() {
  return (
    <div className="flex min-h-screen flex-col bg-white font-['Noto_Sans','Noto_Sans_CJK_KR',sans-serif]">
      <header>
        <TabStrip />
        <Toolbar />
      </header>
      <div className="relative flex-1">
        <NavBar />
        <EventForm />
        <footer className="mt-[60px] rounded border border-t-2 border-[#dfdfdf] border-t-[#d3d3d3] bg-[#f7f7f7] py-3 text-center text-[15px] leading-6 text-[#6c757d]">
          Copyright © thedrowsywinger
        </footer>
        <Toasts />
      </div>
      <DownloadShelf />
      <Taskbar />
    </div>
  );
}
